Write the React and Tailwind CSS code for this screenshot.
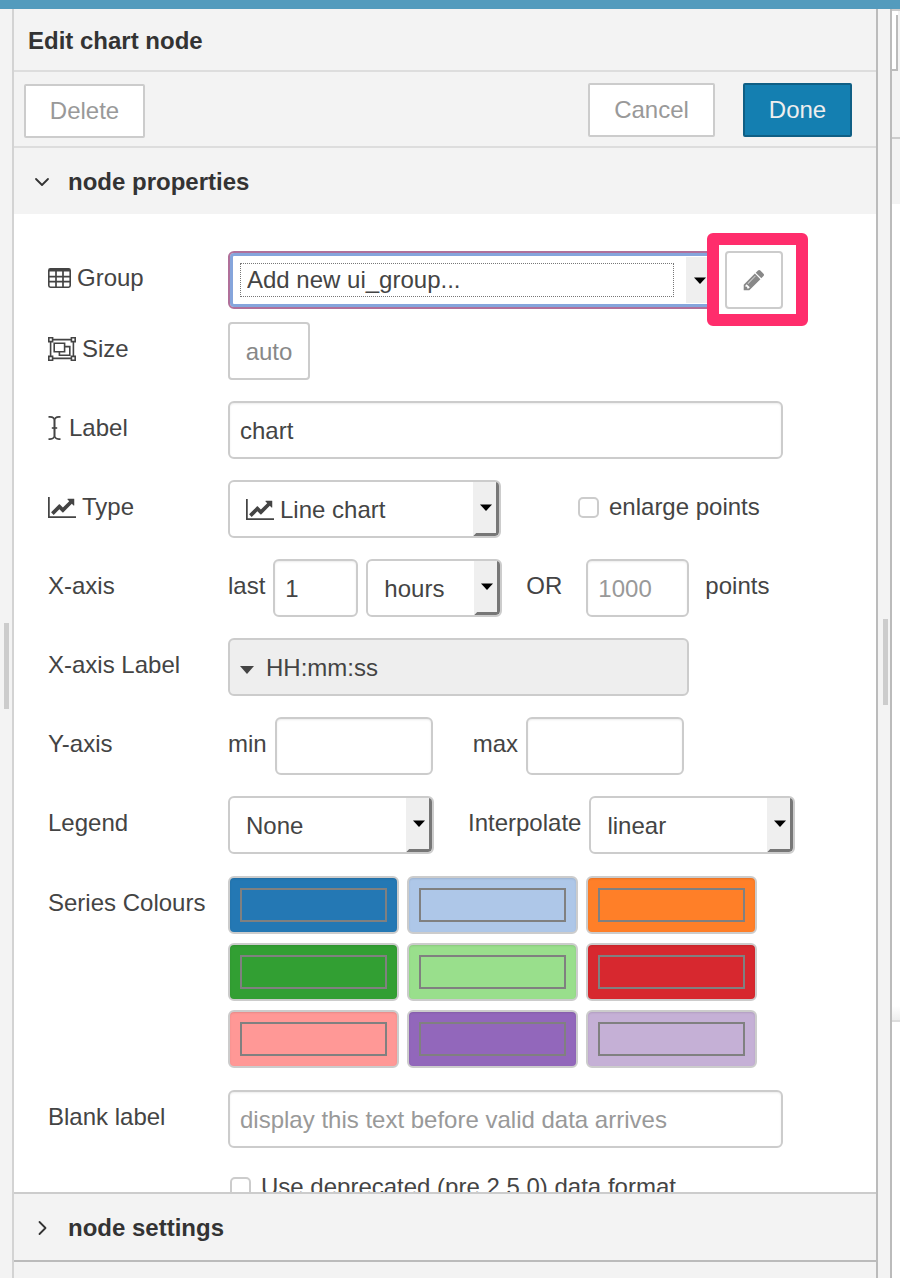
import React, { useState } from "react";

const SERIES_COLOURS = [
  "#2478b4",
  "#aec7e8",
  "#ff7f28",
  "#329f33",
  "#99df8c",
  "#d7282f",
  "#ff9896",
  "#9267bb",
  "#c5b0d6",
];

const TableIcon = () => (
  <svg viewBox="0 0 23 20" className="w-[23px] h-5 shrink-0" fill="none" stroke="currentColor">
    <rect x="0.8" y="0.8" width="21.4" height="18.4" rx="1.6" strokeWidth="1.6" />
    <path d="M1 2.2h21" strokeWidth="2.6" />
    <path d="M1 8.6h21M1 13.6h21M8 3v16M15 3v16" strokeWidth="1.7" />
  </svg>
);

const ObjectGroupIcon = () => (
  <svg viewBox="0 0 28 24" className="w-7 h-6 shrink-0" fill="none" stroke="currentColor" strokeWidth="1.6">
    <path d="M5 2.6h18M5 21.4h18M2.6 5v14M25.4 5v14" />
    <path d="M0.8 0.8h3.8v3.8h-3.8zM23.4 0.8h3.8v3.8h-3.8zM0.8 19.4h3.8v3.8h-3.8zM23.4 19.4h3.8v3.8h-3.8z" />
    <path d="M6.2 6.2h10.4v8.6H6.2z" />
    <path d="M16.6 9.6h5.2v8.6H11.4v-3.4" />
  </svg>
);

const CursorIcon = () => (
  <svg viewBox="0 0 15 24" className="w-[15px] h-6 shrink-0" fill="none" stroke="currentColor" strokeWidth="1.6">
    <path d="M0.5 0.9h1.5q4.5 0 4.5 4v14.2q0 4-4.5 4H0.5" />
    <path d="M12.5 0.9H11q-4.5 0-4.5 4v14.2q0 4 4.5 4h1.5" />
    <path d="M3.8 12h5.4" />
  </svg>
);

const LineChartIcon = () => (
  <svg viewBox="0 128 2048 1536" className="w-7 h-[21px] shrink-0" fill="currentColor">
    <path d="M2048 1536v128h-2048v-1536h128v1408h1920zm-128-1248v435q0 21-19.5 29.5t-35.5-7.5l-121-121-633 633q-10 10-23 10t-23-10l-233-233-416 416-192-192 585-585q10-10 23-10t23 10l233 233 464-464-121-121q-16-16-7.5-35.5t29.5-19.5h435q14 0 23 9t9 23z" />
  </svg>
);

const PencilIcon = () => (
  <svg viewBox="0 0 1792 1792" className="w-6 h-6" fill="currentColor">
    <path d="M491 1536l91-91-235-235-91 91v107h128v128h107zm523-928q0-22-22-22-10 0-17 7l-542 542q-7 7-7 17 0 22 22 22 10 0 17-7l542-542q7-7 7-17zm-54-192l416 416-832 832h-416v-416zm683 96q0 53-37 90l-166 166-416-416 166-165q36-38 90-38 53 0 91 38l235 234q37 39 37 91z" />
  </svg>
);

const Caret = () => (
  <svg viewBox="0 0 12 7" className="w-3 h-[7px]" fill="#000">
    <path d="M0 0.5h12L6 7z" />
  </svg>
);

const Chevron = ({ open }) => (
  <svg
    viewBox="0 0 16 16"
    className="w-4 h-4 shrink-0"
    fill="none"
    stroke="#333"
    strokeWidth="1.8"
    strokeLinecap="round"
    strokeLinejoin="round"
  >
    {open ? <path d="M2 5l6 6 6-6" /> : <path d="M5.5 2l6 6-6 6" />}
  </svg>
);

// Label on the left, controls on the right
const Row = ({ label, htmlFor, icon, className = "", children }) => (
  <div className={`flex items-start ${className}`}>
    <label
      htmlFor={htmlFor}
      className="w-[180px] h-[58px] pb-1 shrink-0 flex items-center gap-1.5 whitespace-nowrap"
    >
      {icon}
      {label}
    </label>
    {children}
  </div>
);

const inputStyle =
  "h-[58px] px-2.5 pt-0.5 bg-white border-2 border-[#ccc] rounded-md shadow-[inset_0_1px_2px_rgba(0,0,0,0.08)] placeholder:text-[#999] outline-none";

const inlineLabel = "h-[58px] pb-1 shrink-0 flex items-center whitespace-nowrap";

// Drop-down with the bevelled arrow button
const Select = ({ id, label, icon, options, className = "" }) => (
  <div
    className={`h-[58px] shrink-0 flex items-stretch bg-white border-2 border-[#ccc] rounded-md overflow-hidden ${className}`}
  >
    <div className="flex-1 min-w-0 pl-4 flex items-center gap-1.5">
      {icon}
      <select
        id={id}
        aria-label={label}
        className="flex-1 min-w-0 h-full pt-0.5 bg-transparent appearance-none outline-none"
      >
        {options.map((option) => (
          <option key={option}>{option}</option>
        ))}
      </select>
    </div>
    <span className="w-[26px] shrink-0 flex items-center justify-center bg-[#efefef] border-r-3 border-b-3 border-l-3 border-[#777] border-l-[#efefef] rounded-br-sm pointer-events-none">
      <Caret />
    </span>
  </div>
);

const Gutter = ({ className = "" }) => (
  <div className={`shrink-0 flex items-center justify-end bg-[#f3f3f3] ${className}`}>
    <div className="w-[5px] h-[86px] bg-[#ccc]" />
  </div>
);

export default function App() {
  const [colours, setColours] = useState(SERIES_COLOURS);

  const updateColour = (index, value) => {
    setColours((prev) => prev.map((c, i) => (i === index ? value : c)));
  };

  return (
    <div className="h-screen flex flex-col overflow-hidden bg-white text-[#444] text-2xl font-['Liberation_Sans',Arial,sans-serif]">
      <div className="h-[9px] shrink-0 bg-[#539bbd]" />

      <div className="flex-1 min-h-0 flex">
        <Gutter className="w-3 pr-[3px] pt-11" />

        {/* Edit tray */}
        <main className="flex-1 min-w-0 flex flex-col border-l-2 border-l-[#d3d3d3] border-r-2 border-r-[#bbb]">
          <h1 className="h-[63px] pt-0.5 shrink-0 flex items-center px-3.5 bg-[#f3f3f3] border-b-2 border-[#ddd] font-bold text-[#333]">
            Edit chart node
          </h1>

          <div className="h-[76px] pt-0.5 shrink-0 flex items-center px-2.5 bg-[#f3f3f3] border-b-2 border-[#ddd]">
            <button className="w-[121px] h-[54px] mt-0.5 bg-white border-2 border-[#ccc] rounded-xs text-[#999]">
              Delete
            </button>
            <button className="w-[127px] h-[54px] ml-auto bg-white border-2 border-[#ccc] rounded-xs text-[#999]">
              Cancel
            </button>
            <button className="w-[109px] h-[54px] ml-7 mr-3.5 bg-[#147fb1] border-2 border-[#0f5f85] rounded-xs text-[#eee]">
              Done
            </button>
          </div>

          <button className="h-[66px] pt-0.5 shrink-0 flex items-center gap-4 pl-5 bg-[#f3f3f3] font-bold text-[#333]">
            <Chevron open />
            <span className="ml-0.5">node properties</span>
          </button>

          <form className="flex-1 min-h-0 overflow-hidden flex flex-col gap-[21px] pt-[37px] pl-[34px] pr-[93px]">
            <Row label="Group" htmlFor="group" icon={<TableIcon />} className="-mb-2">
              <div className="flex-1 min-w-0 h-[58px] flex items-stretch py-1 pl-1 bg-white border-2 border-[#b0709a] rounded-md shadow-[inset_0_0_0_3px_#85a5dc]">
                <div className="flex-1 min-w-0 flex items-center pl-1.5">
                  <select
                    id="group"
                    className="w-full h-[34px] pl-1.5 appearance-none bg-transparent border border-dotted border-[#777] outline-none"
                  >
                    <option>Add new ui_group...</option>
                  </select>
                </div>
                <span className="w-[27px] ml-3 shrink-0 flex items-center justify-center bg-[#efefef] pointer-events-none">
                  <Caret />
                </span>
              </div>
              <div className="relative ml-2.5 shrink-0">
                <div className="absolute -top-[18px] -left-[18px] w-[101px] h-[93px] bg-white border-12 border-[#ff2d6c] rounded-md" />
                <button
                  type="button"
                  aria-label="Edit group"
                  className="relative w-[58px] h-[58px] flex items-center justify-center bg-white border-2 border-[#ccc] rounded-sm text-[#888]"
                >
                  <PencilIcon />
                </button>
              </div>
            </Row>

            <Row label="Size" htmlFor="size" icon={<ObjectGroupIcon />}>
              <button
                id="size"
                type="button"
                className="w-[82px] h-[58px] pt-0.5 bg-white border-2 border-[#ccc] rounded-sm text-[#888]"
              >
                auto
              </button>
            </Row>

            <Row label="Label" htmlFor="label" icon={<CursorIcon />}>
              <input id="label" type="text" defaultValue="chart" className={`flex-1 min-w-0 ${inputStyle}`} />
            </Row>

            <Row label="Type" htmlFor="type" icon={<LineChartIcon />}>
              <Select id="type" icon={<LineChartIcon />} options={["Line chart", "Bar chart", "Pie chart"]} className="w-[273px]" />
              <label className={`${inlineLabel} ml-[77px] gap-2.5`}>
                <input
                  type="checkbox"
                  className="w-[21px] h-[21px] appearance-none bg-white border-2 border-[#ccc] rounded-[5px]"
                />
                enlarge points
              </label>
            </Row>

            <Row label="X-axis" htmlFor="last">
              <label htmlFor="last" className={`${inlineLabel} mr-2`}>last</label>
              <input id="last" type="text" defaultValue="1" className={`w-[85px] mr-2 ${inputStyle}`} />
              <Select label="Units" options={["hours", "minutes", "seconds"]} className="w-[136px]" />
              <span className={`${inlineLabel} mx-6`}>OR</span>
              <input id="points" type="text" placeholder="1000" className={`w-[103px] mr-4 ${inputStyle}`} />
              <label htmlFor="points" className={inlineLabel}>points</label>
            </Row>

            <Row label="X-axis Label" htmlFor="format">
              <button
                id="format"
                type="button"
                className="w-[461px] h-[58px] pl-2.5 pt-0.5 flex items-center gap-3 bg-[#eee] border-2 border-[#ccc] rounded-md"
              >
                <svg viewBox="0 0 14 8" className="w-3.5 h-2 mt-1" fill="currentColor">
                  <path d="M0 0h14L7 8z" />
                </svg>
                HH:mm:ss
              </button>
            </Row>

            <Row label="Y-axis" htmlFor="ymin">
              <label htmlFor="ymin" className={`${inlineLabel} mr-2`}>min</label>
              <input id="ymin" type="text" className={`w-[158px] ${inputStyle}`} />
              <label htmlFor="ymax" className={`${inlineLabel} ml-10 mr-2`}>max</label>
              <input id="ymax" type="text" className={`w-[158px] ${inputStyle}`} />
            </Row>

            <Row label="Legend" htmlFor="legend">
              <Select id="legend" options={["None", "Show"]} className="w-[206px]" />
              <label htmlFor="interpolate" className={`${inlineLabel} ml-[34px] mr-2`}>Interpolate</label>
              <Select id="interpolate" options={["linear", "step", "bezier"]} className="w-[206px]" />
            </Row>

            <Row label="Series Colours" htmlFor="colour0" className="py-px">
              <div className="grid grid-cols-[repeat(3,171px)] gap-x-2 gap-y-[9px]">
                {colours.map((colour, i) => (
                  <input
                    key={i}
                    id={`colour${i}`}
                    type="color"
                    aria-label={`Series colour ${i + 1}`}
                    value={colour}
                    onChange={(e) => updateColour(i, e.target.value)}
                    style={{ backgroundColor: colour }}
                    className="w-full h-[58px] p-2.5 appearance-none border-2 border-[#ccc] rounded-md shadow-[inset_0_1px_2px_rgba(0,0,0,0.1)] [&::-webkit-color-swatch-wrapper]:p-0 [&::-webkit-color-swatch]:rounded-none [&::-webkit-color-swatch]:border-2 [&::-webkit-color-swatch]:border-[#808080]"
                  />
                ))}
              </div>
            </Row>

            <Row label="Blank label" htmlFor="blank">
              <input
                id="blank"
                type="text"
                placeholder="display this text before valid data arrives"
                className={`flex-1 min-w-0 ${inputStyle}`}
              />
            </Row>

            <label className="ml-[182px] pt-0.5 flex items-center gap-2.5 whitespace-nowrap">
              <input
                type="checkbox"
                className="w-[21px] h-[21px] appearance-none bg-white border-2 border-[#ccc] rounded-[5px]"
              />
              Use deprecated (pre 2.5.0) data format
            </label>
          </form>

          <button className="h-[70px] pt-0.5 shrink-0 flex items-center gap-4 pl-5 bg-[#f3f3f3] border-y-2 border-t-[#ccc] border-b-[#bbb] font-bold text-[#333]">
            <Chevron />
            <span className="ml-0.5">node settings</span>
          </button>
          <div className="h-4 shrink-0 bg-[#f3f3f3]" />
        </main>

        <Gutter className="w-3 pr-0.5 pt-9" />

        {/* Edge of the sidebar */}
        <aside className="w-2.5 shrink-0 flex flex-col bg-white border-l-2 border-[#bbb]">
          <div className="h-[62px] flex border-t-2 border-[#ccc] bg-[#f3f3f3]">
            <div className="w-1.5 mr-0.5 flex flex-col bg-white border-b-2 border-[#bbb]">
              <div className="mt-1 flex-1 border-r-2 border-[#bbb]" />
            </div>
          </div>
          <div className="h-[68px] bg-[#f3f3f3] border-b-2 border-[#ccc]" />
          <div className="h-[65px] bg-[#f3f3f3]" />
          <div className="flex-1" />
          <div className="h-4 bg-linear-to-b from-white to-[#eee] border-b-2 border-[#ddd]" />
          <div className="h-64 shrink-0" />
        </aside>
      </div>
    </div>
  );
}
